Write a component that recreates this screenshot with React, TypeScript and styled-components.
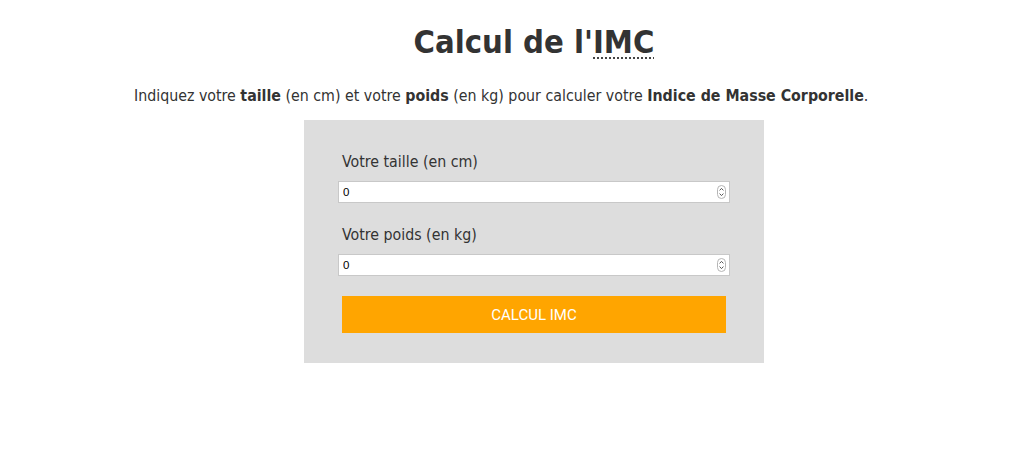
import React, { useState } from "react";
import styled, { createGlobalStyle } from "styled-components";

const GlobalStyle = createGlobalStyle`
  html, body {
    margin: 0;
    padding: 0;
    background: #fff;
  }
  body {
    font-family: "DejaVu Sans Condensed", "DejaVu Sans", sans-serif;
    color: #333;
  }
`;

const Page = styled.div`
  width: 800px;
  margin-left: 134px;
  display: flex;
  flex-direction: column;
  align-items: center;
  padding-top: 22px;
`;

const Title = styled.h1`
  margin: 0;
  font-size: 32.5px;
  font-weight: bold;
  line-height: 40px;
  color: #333;

  abbr {
    text-decoration: underline dotted #444;
    text-decoration-thickness: 2px;
    text-underline-offset: 4px;
  }
`;

const Intro = styled.p`
  align-self: stretch;
  margin: 22px 0 0;
  font-size: 15.8px;
  line-height: 24px;
`;

const Panel = styled.form`
  margin-top: 12px;
  width: 384px;
  padding: 32px 38px 30px;
  background: #dddddd;
  display: flex;
  flex-direction: column;
`;

const Field = styled.div`
  display: flex;
  flex-direction: column;
  margin-bottom: 20px;

  & + & {
    margin-top: 2px;
  }
`;

const Label = styled.label`
  font-size: 15.8px;
  line-height: 20px;
  margin-bottom: 9px;
`;

const InputWrap = styled.div`
  position: relative;
  margin: 0 -4px;
`;

const NumberInput = styled.input`
  box-sizing: border-box;
  width: 100%;
  height: 22px;
  border: 1px solid #c8c8c8;
  background: #fff;
  padding: 0 20px 0 4px;
  font-family: "Liberation Sans", Arial, sans-serif;
  font-size: 11.5px;
  color: #000;
  outline: none;
  -moz-appearance: textfield;

  &::-webkit-outer-spin-button,
  &::-webkit-inner-spin-button {
    -webkit-appearance: none;
    margin: 0;
  }
`;

const Spinner = styled.svg`
  position: absolute;
  right: 4px;
  top: 4px;
  pointer-events: none;
`;

const Button = styled.button`
  height: 37px;
  border: none;
  background: #ffa500;
  color: #fff;
  font-family: Roboto, "Liberation Sans", sans-serif;
  font-size: 15px;
  font-weight: 400;
  cursor: pointer;
`;

function SpinIcon() {
  return (
    <Spinner width="9" height="14" viewBox="0 0 9 14">
      <rect x="0.5" y="0.5" width="8" height="13" rx="4" fill="#fff" stroke="#b5b5b5" />
      <path d="M2.6 5.4 L4.5 3.4 L6.4 5.4" fill="none" stroke="#555" strokeWidth="1" />
      <path d="M2.6 8.6 L4.5 10.6 L6.4 8.6" fill="none" stroke="#555" strokeWidth="1" />
    </Spinner>
  );
}

export default function App() {
  const [taille, setTaille] = useState("0");
  const [poids, setPoids] = useState("0");

  return (
    <Page>
      <GlobalStyle />
      <Title>
        Calcul de l'<abbr title="Indice de Masse Corporelle">IMC</abbr>
      </Title>
      <Intro>
        Indiquez votre <b>taille</b> (en cm) et votre <b>poids</b> (en kg) pour
        calculer votre <b>Indice de Masse Corporelle</b>.
      </Intro>
      <Panel onSubmit={(e) => e.preventDefault()}>
        <Field>
          <Label htmlFor="taille">Votre taille (en cm)</Label>
          <InputWrap>
            <NumberInput
              id="taille"
              type="number"
              value={taille}
              onChange={(e) => setTaille(e.target.value)}
            />
            <SpinIcon />
          </InputWrap>
        </Field>
        <Field>
          <Label htmlFor="poids">Votre poids (en kg)</Label>
          <InputWrap>
            <NumberInput
              id="poids"
              type="number"
              value={poids}
              onChange={(e) => setPoids(e.target.value)}
            />
            <SpinIcon />
          </InputWrap>
        </Field>
        <Button type="submit">CALCUL IMC</Button>
      </Panel>
    </Page>
  );
}
